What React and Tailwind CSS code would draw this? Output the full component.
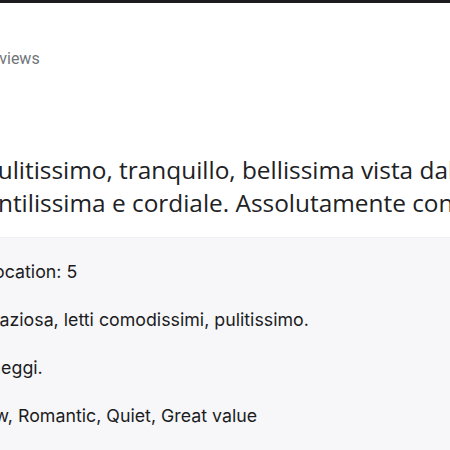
export default function App() {
  return (
    <div className="w-[450px] h-[450px] overflow-hidden bg-white flex flex-col">
      {/* top bar */}
      <div className="h-[3px] bg-[#1c1c1e] shrink-0" />

      {/* header */}
      <div className="h-[234px] shrink-0 flex flex-col">
        <div className="mt-[44px] ml-[-19px] whitespace-nowrap text-[16px] text-[#70757a] font-['Roboto',sans-serif]">
          Reviews
        </div>
        <div className="mt-[82px] text-[24.4px] leading-[33px] text-[#202124] font-['Open_Sans',sans-serif] whitespace-nowrap">
          <div className="ml-[-17px]">Pulitissimo, tranquillo, bellissima vista dal balcone.</div>
          <div className="ml-[-29px]">gentilissima e cordiale. Assolutamente consigliato.</div>
        </div>
      </div>

      {/* details panel */}
      <div className="flex-1 bg-[#f7f7f9] border-t border-[#f0f0f2] pt-[22px] font-['Inter',sans-serif] text-[17.8px] leading-[24px] text-[#1c1c1e] whitespace-nowrap flex flex-col gap-[24px]">
        <div className="ml-[-16px]">Location: 5</div>
        <div className="ml-[-23px]">Spaziosa, letti comodissimi, pulitissimo.</div>
        <div className="ml-[-47px]">parcheggi.</div>
        <div className="ml-[-32px]">View, Romantic, Quiet, Great value</div>
      </div>
    </div>
  );
}
